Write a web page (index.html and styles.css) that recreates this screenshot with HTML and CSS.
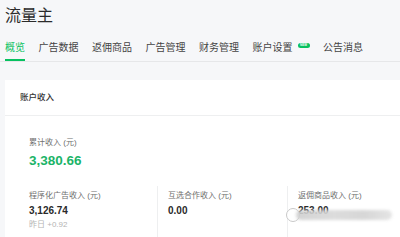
FILE: index.html
```html
<!DOCTYPE html>
<html lang="zh-CN">
<head>
<meta charset="utf-8">
<link rel="stylesheet" href="styles.css">
</head>
<body>
<div class="page">
  <h1 class="title">流量主</h1>
  <nav class="tabs">
    <span class="tab active">概览</span>
    <span class="tab">广告数据</span>
    <span class="tab">返佣商品</span>
    <span class="tab">广告管理</span>
    <span class="tab">财务管理</span>
    <span class="tab">账户设置<span class="badge">NEW</span></span>
    <span class="tab">公告消息</span>
  </nav>
  <section class="card">
    <div class="card-head">账户收入</div>
    <div class="card-body">
      <div class="total">
        <div class="label">累计收入 (元)</div>
        <div class="total-value">3,380.66</div>
      </div>
      <div class="cols">
        <div class="col">
          <div class="label">程序化广告收入 (元)</div>
          <div class="value">3,126.74</div>
          <div class="sub">昨日 +0.92</div>
        </div>
        <div class="col">
          <div class="label">互选合作收入 (元)</div>
          <div class="value">0.00</div>
        </div>
        <div class="col last">
          <div class="label">返佣商品收入 (元)</div>
          <div class="value">253.00</div>
          <div class="watermark"><span class="wm-logo"></span><span class="wm-bar"></span></div>
        </div>
      </div>
    </div>
  </section>
</div>
</body>
</html>
```
FILE: styles.css
```css
html, body {
  margin: 0;
  padding: 0;
  background: #f6f7f9;
  font-family: "Liberation Sans", "Noto Sans CJK SC", sans-serif;
  color: #333;
  overflow: hidden;
}
.page {
  padding-left: 5px;
  width: 395px;
  height: 237px;
  overflow: hidden;
}
.title {
  margin: 0;
  padding-top: 6px;
  font-size: 16px;
  line-height: 20px;
  font-weight: 400;
  color: #2b2b2b;
}
.tabs {
  display: flex;
  align-items: flex-start;
  margin-top: 15px;
  margin-left: -5px;
  padding-left: 5px;
  border-bottom: 1px solid #e6e7e9;
}
.tab {
  position: relative;
  display: flex;
  align-items: flex-start;
  font-size: 10px;
  line-height: 14px;
  color: #444;
  padding-bottom: 4px;
  border-bottom: 2px solid transparent;
  margin-right: 13.5px;
  white-space: nowrap;
}
.tab.active {
  color: #07c160;
  border-bottom-color: #07c160;
}
.badge {
  display: inline-block;
  margin-left: 5px;
  margin-top: 2px;
  width: 12px;
  height: 5px;
  border-radius: 3px;
  background: #07c160;
  color: #fff;
  font-size: 3px;
  line-height: 5px;
  text-align: center;
  font-weight: 700;
  overflow: hidden;
}
.card {
  margin-top: 18px;
  background: #fff;
  height: 200px;
}
.card-head {
  height: 35px;
  line-height: 35px;
  padding-left: 15px;
  font-size: 8.5px;
  font-weight: 500;
  color: #333;
  border-bottom: 1px solid #eeeff0;
}
.card-body {
  padding-left: 24px;
  padding-top: 21px;
}
.label {
  font-size: 8px;
  line-height: 12px;
  color: #6f6f6f;
  white-space: nowrap;
}
.total-value {
  margin-top: 3px;
  font-size: 13.5px;
  line-height: 17px;
  font-weight: 700;
  color: #1bb468;
}
.cols {
  display: flex;
  margin-top: 17px;
  height: 60px;
}
.col {
  width: 128px;
  padding-top: 4px;
  flex: none;
}
.col + .col {
  border-left: 1px solid #eeeff0;
  padding-left: 10px;
  width: 119px;
}
.col.last {
  position: relative;
  width: 100px;
}
.value {
  margin-top: 2px;
  font-size: 10px;
  line-height: 14px;
  font-weight: 700;
  color: #2a2a2a;
}
.sub {
  margin-top: 2px;
  font-size: 8px;
  line-height: 10px;
  color: #b4b4b4;
}
.watermark {
  position: absolute;
  left: -2px;
  top: 21px;
  width: 107px;
  height: 16px;
}
.wm-logo {
  position: absolute;
  left: 0;
  top: 1px;
  width: 12px;
  height: 12px;
  border-radius: 50%;
  border: 1px solid #c8c8c8;
  background: #fff;
  filter: blur(0.6px);
}
.wm-bar {
  position: absolute;
  left: 10px;
  top: 3px;
  width: 96px;
  height: 10px;
  border-radius: 5px;
  background: linear-gradient(90deg, #cfcfcf, #d9d9d9 40%, #d2d2d2 70%, #e2e2e2);
  filter: blur(1.5px);
  opacity: 0.9;
}
```
